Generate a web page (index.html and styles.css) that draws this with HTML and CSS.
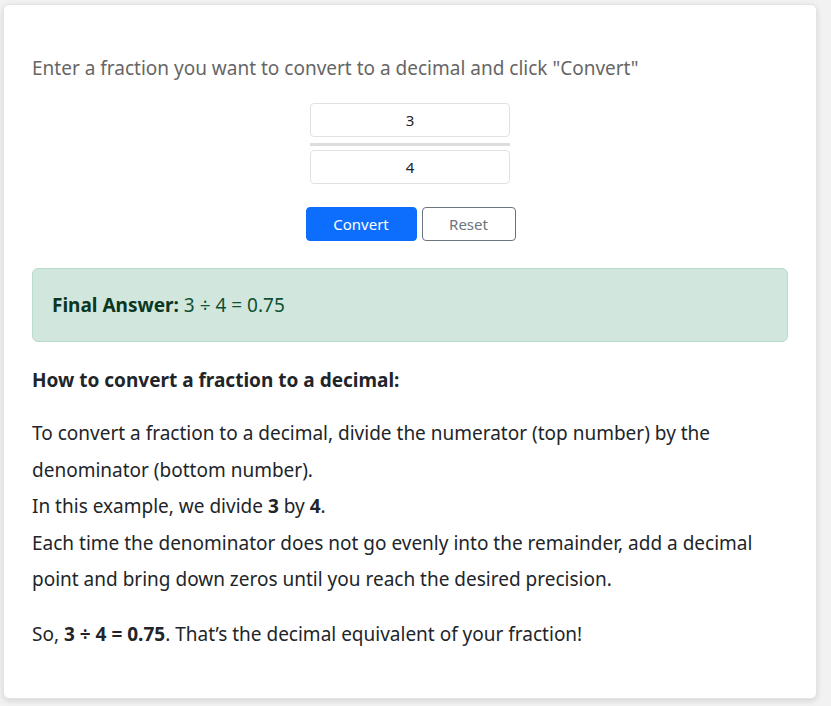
FILE: index.html
```html
<!DOCTYPE html>
<html lang="en">
<head>
  <meta charset="UTF-8" />
  <meta name="viewport" content="width=device-width, initial-scale=1.0" />
  <title>Fraction to Decimal</title>
  <link rel="stylesheet" href="styles.css">
</head>
<body>
  <div class="card">
    <p class="intro">Enter a fraction you want to convert to a decimal and click "Convert"</p>

    <!-- Fraction inputs -->
    <div class="fraction">
      <input type="text" class="frac-input" id="numerator" value="3">
      <div class="frac-line"></div>
      <input type="text" class="frac-input" id="denominator" value="4">
    </div>

    <div class="buttons">
      <button class="btn btn-primary">Convert</button>
      <button class="btn btn-outline">Reset</button>
    </div>

    <!-- Result -->
    <div class="alert-success">
      <strong>Final Answer:</strong> 3 ÷ 4 = 0.75
    </div>

    <!-- Explanation -->
    <h5 class="steps-title">How to convert a fraction to a decimal:</h5>
    <p class="steps">
      To convert a fraction to a decimal, divide the numerator (top number) by the denominator (bottom number).<br>
      In this example, we divide <strong>3</strong> by <strong>4</strong>.<br>
      Each time the denominator does not go evenly into the remainder, add a decimal point and bring down zeros until you reach the desired precision.
    </p>
    <p class="steps">So, <strong>3 ÷ 4 = 0.75</strong>. That’s the decimal equivalent of your fraction!</p>
  </div>
</body>
</html>
```

FILE: styles.css
```css
body {
  font-family: "Noto Sans", "Open Sans", sans-serif;
  margin: 0;
  background-color: #f2f2f2;
  color: #212529;
}

/* Card */
.card {
  margin: 4px 14px 9px 3px;
  padding: 48px 28px 36px;
  background-color: #fff;
  border: 1px solid #e3e3e3;
  border-radius: 6px;
  box-shadow: 0 2px 6px rgb(0 0 0 / 0.12);
}

.intro {
  margin: 0 0 20px;
  font-size: 19px;
  line-height: 30px;
  color: #666;
}

/* Fraction */
.fraction {
  width: 200px;
  margin: 0 auto;
}

.frac-input {
  display: block;
  width: 100%;
  height: 34px;
  box-sizing: border-box;
  border: 1px solid #dee2e6;
  border-radius: 4px;
  text-align: center;
  font-family: inherit;
  font-size: 15px;
  color: #212529;
}

.frac-line {
  height: 3px;
  margin: 6px 0 4px;
  background-color: #ddd;
}

/* Buttons */
.buttons {
  display: flex;
  justify-content: center;
  gap: 5px;
  margin: 23px 0 27px;
  padding-left: 1px;
}

.btn {
  height: 34px;
  border-radius: 4px;
  font-family: inherit;
  font-size: 15px;
  cursor: pointer;
}

.btn-primary {
  width: 111px;
  border: 1px solid #0d6efd;
  background-color: #0d6efd;
  color: #fff;
}

.btn-outline {
  width: 94px;
  border: 1px solid #6c757d;
  background-color: #fff;
  color: #6c757d;
}

/* Result */
.alert-success {
  padding: 21px 19px;
  font-size: 19px;
  line-height: 30px;
  color: #0f5132;
  background-color: #d1e7dd;
  border: 1px solid #badbcc;
  border-radius: 6px;
}

.alert-success strong {
  color: #0a3622;
}

/* Explanation */
.steps-title {
  margin: 24px 0 21px;
  font-size: 19px;
  line-height: 28px;
  font-weight: bold;
}

.steps {
  margin: 0 0 18px;
  font-size: 19px;
  line-height: 36.5px;
}

.steps:last-child {
  margin-bottom: 10px;
}
```
